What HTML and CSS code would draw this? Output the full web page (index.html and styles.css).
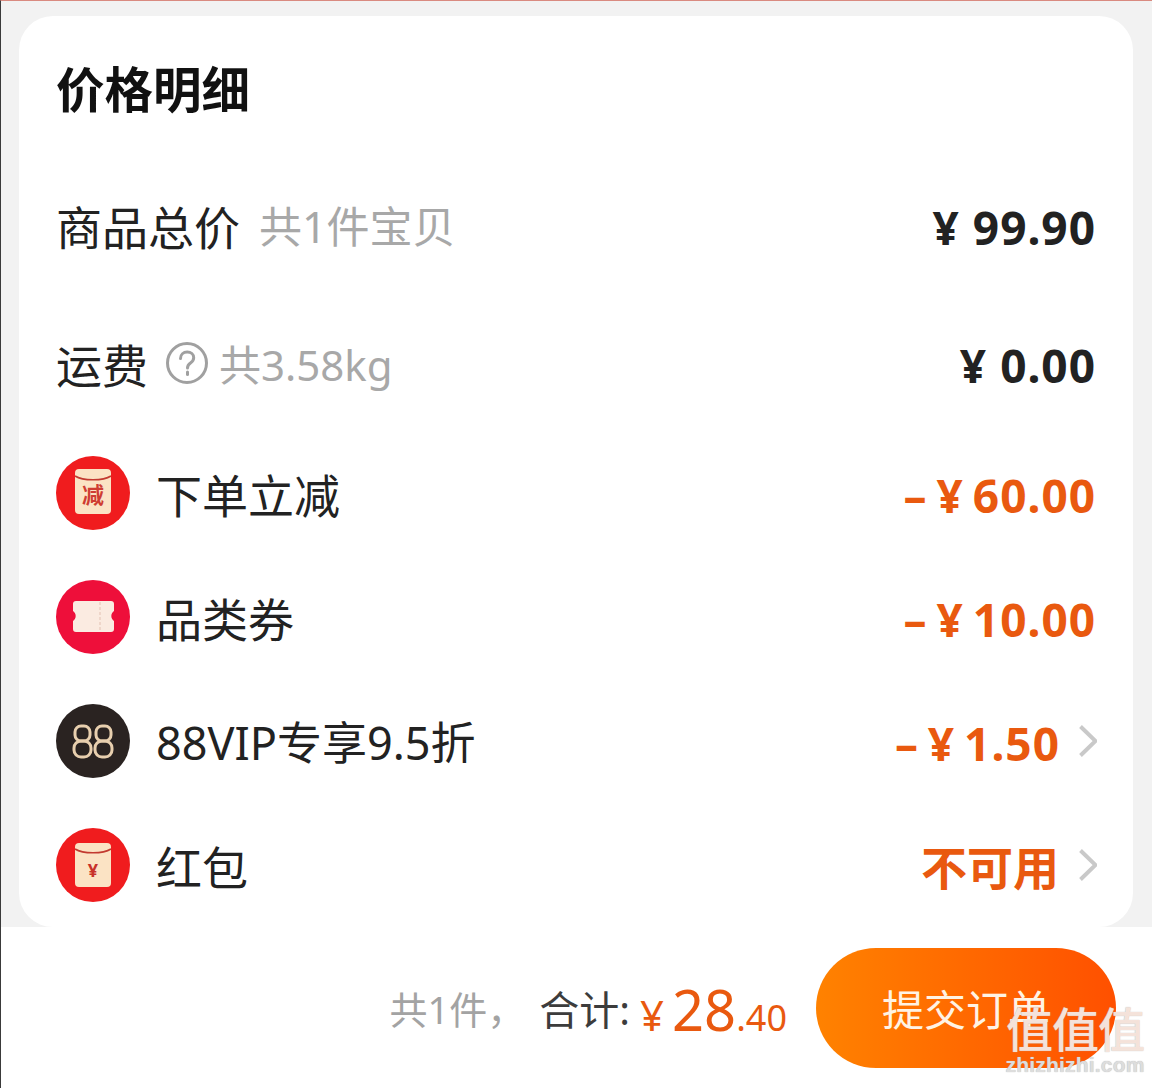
FILE: index.html
```html
<!DOCTYPE html>
<html lang="zh">
<head>
<meta charset="utf-8">
<title>价格明细</title>
<link rel="stylesheet" href="styles.css">
</head>
<body>
<div class="page">
  <main class="content">
    <section class="card">
      <h1 class="title">价格明细</h1>
      <div class="row row-tall">
        <div class="left"><span class="label">商品总价</span><span class="sub sub-first">共1件宝贝</span></div>
        <span class="amount">¥ 99.90</span>
      </div>
      <div class="row row-tall">
        <div class="left"><span class="label">运费</span>
          <svg class="help" viewBox="0 0 42 42"><circle cx="21" cy="21" r="19.5"/><path d="M14.5 16.5c0-4 3-6.5 6.700-6.500 3.800 0 6.500 2.500 6.500 5.700 0 2.500-1.300 3.900-3.200 5.200-2 1.400-3 2.500-3 5"/><path d="M21.500 30v2.500"/></svg>
          <span class="sub">共3.58kg</span></div>
        <span class="amount">¥ 0.00</span>
      </div>
      <div class="row">
        <div class="left">
          <svg class="badge" viewBox="0 0 74 74"><circle cx="37" cy="37" r="37" fill="#f01c1e"/><rect x="19" y="13" width="36" height="45" rx="4" fill="#fbe3c4"/><path d="M19 20c8 5 28 5 36 0" fill="none" stroke="#c23a30" stroke-width="1.500"/><text class="badge-char" x="37" y="47" text-anchor="middle">减</text></svg>
          <span class="label label-icon">下单立减</span></div>
        <span class="amount accent">– ¥ 60.00</span>
      </div>
      <div class="row">
        <div class="left">
          <svg class="badge" viewBox="0 0 74 74"><circle cx="37" cy="37" r="37" fill="#ee0f3a"/><path d="M20 21h35a3 3 0 0 1 3 3v7a6 6 0 0 0 0 10v8a3 3 0 0 1-3 3H20a3 3 0 0 1-3-3v-8a6 6 0 0 0 0-10v-7a3 3 0 0 1 3-3z" fill="#fbebe1"/><path d="M44 22v29" stroke="#eccfc2" stroke-width="1.500" stroke-dasharray="3 2"/></svg>
          <span class="label label-icon">品类券</span></div>
        <span class="amount accent">– ¥ 10.00</span>
      </div>
      <div class="row">
        <div class="left">
          <svg class="badge" viewBox="0 0 74 74"><circle cx="37" cy="37" r="37" fill="#2a2321"/><g fill="none" stroke="#e8cfae" stroke-width="3"><rect x="19" y="22" width="15" height="15" rx="6"/><rect x="18" y="37" width="17" height="16" rx="7"/><rect x="40" y="22" width="15" height="15" rx="6"/><rect x="39" y="37" width="17" height="16" rx="7"/></g></svg>
          <span class="label label-icon label-vip">88VIP专享9.5折</span></div>
        <div class="right"><span class="amount accent">– ¥ 1.50</span>
          <svg class="chevron" viewBox="0 0 18 32"><path d="M1.500 1.500 16.500 16 1.500 30.500"/></svg></div>
      </div>
      <div class="row">
        <div class="left">
          <svg class="badge" viewBox="0 0 74 74"><circle cx="37" cy="37" r="37" fill="#f01c1e"/><rect x="19" y="15" width="36" height="44" rx="4" fill="#fbe3c4"/><path d="M19 21c8 5 28 5 36 0" fill="none" stroke="#c23a30" stroke-width="1.500"/><text class="badge-yen" x="37" y="49" text-anchor="middle">¥</text></svg>
          <span class="label label-icon">红包</span></div>
        <div class="right"><span class="amount accent unavailable">不可用</span>
          <svg class="chevron" viewBox="0 0 18 32"><path d="M1.500 1.500 16.500 16 1.500 30.500"/></svg></div>
      </div>
    </section>
  </main>
  <footer class="footer">
    <span class="count">共1件，</span>
    <span class="total-label">合计:</span>
    <span class="total"><span class="yen">¥</span><span class="big">28</span><span class="small">.40</span></span>
    <button class="submit">提交订单</button>
    <div class="watermark"><span class="wm-chars">值值值</span><span class="wm-url">zhizhizhi.com</span></div>
  </footer>
</div>
</body>
</html>
```
FILE: styles.css
```css
* { box-sizing: border-box; }
html, body { margin: 0; padding: 0; }
body {
  width: 1152px;
  height: 1088px;
  overflow: hidden;
  background: #fff;
  font-family: "Noto Sans", "Noto Sans CJK SC", sans-serif;
  color: #1c1c1c;
}
.page {
  height: 1088px;
  display: flex;
  flex-direction: column;
  border-top: 1px solid #d98a80;
  border-left: 1px solid #3a3a3a;
}
.content {
  background: #f2f2f2;
  padding: 15px 19px 0 18px;
  height: 926px;
  flex: none;
}
.card {
  height: 911px;
  overflow: hidden;
  background: #fff;
  border-radius: 34px;
  padding: 41px 36px 0 37px;
}
.title {
  margin: 0 0 35px;
  font-size: 48.500px;
  line-height: 64px;
  font-weight: 700;
  color: #111;
}
.row {
  height: 124px;
  display: flex;
  align-items: center;
  justify-content: space-between;
}
.row-tall { height: 138px; }
.row-tall + .row:not(.row-tall) { margin-top: -1px; }
.left, .right { display: flex; align-items: center; }
.label { font-size: 46px; line-height: 60px; padding-top: 4px; color: #222; }
.label-icon { margin-left: 26px; }
.label-vip { font-size: 45px; }
.sub { font-size: 42px; line-height: 60px; padding-top: 4px; color: #a8a8a8; }
.sub-first { font-size: 43px; margin-left: 19px; }
.help {
  width: 42px;
  height: 42px;
  margin: 0 11px 0 18px;
  fill: none;
  stroke: #a0a0a0;
  stroke-width: 3;
  stroke-linecap: round;
}
.badge { width: 74px; height: 74px; flex: none; }
.badge-char {
  font-family: "Noto Sans CJK SC", sans-serif;
  font-size: 22px;
  font-weight: 700;
  fill: #cf3d32;
}
.badge-yen {
  font-family: "Noto Sans", sans-serif;
  font-size: 18px;
  font-weight: 700;
  fill: #c8322a;
}
.amount {
  font-size: 46px;
  line-height: 60px;
  padding-top: 3px;
  font-weight: 700;
  letter-spacing: 1px;
  color: #222;
  margin-right: 1px;
  white-space: nowrap;
}
.accent { color: #e9590f; word-spacing: -4px; }
.right .amount { margin-right: 19px; }
.right .unavailable { font-size: 46px; letter-spacing: 0; margin-right: 20px; }
.chevron {
  width: 18px;
  height: 32px;
  fill: none;
  stroke: #c9c9c9;
  stroke-width: 4;
}
.footer {
  flex: 1;
  position: relative;
  background: #fff;
  display: flex;
  align-items: center;
  justify-content: flex-end;
  padding: 0 36px 0 0;
}
.count { font-size: 38px; color: #a3a3a3; margin-right: 14px; }
.total-label { font-size: 40px; color: #3c3c3c; }
.total { display: flex; align-items: baseline; color: #e9590f; margin: 0 29px 0 10px; padding-top: 3px; }
.yen { font-size: 42px; margin-right: 8px; }
.big { font-size: 56px; line-height: 70px; }
.small { font-size: 36px; }
.submit {
  width: 300px;
  height: 120px;
  border: 0;
  border-radius: 60px;
  background: linear-gradient(90deg, #ff8200, #ff5000);
  color: #fff3e4;
  font: 400 42px "Noto Sans CJK SC", sans-serif;
  padding: 0;
}
.watermark {
  position: absolute;
  left: 1003px;
  top: 74px;
  width: 142px;
  display: flex;
  flex-direction: column;
  align-items: center;
  color: rgba(255, 235, 225, .9);
  text-shadow: 0 0 1px #aaa;
}
.wm-chars { font-family: "Noto Sans CJK SC", sans-serif; font-size: 47px; line-height: 52px; letter-spacing: -1px; font-weight: 500; white-space: nowrap; }
.wm-url { font: 700 21px/24px "Liberation Sans", sans-serif; letter-spacing: .2px; color: #ddd; }
```
